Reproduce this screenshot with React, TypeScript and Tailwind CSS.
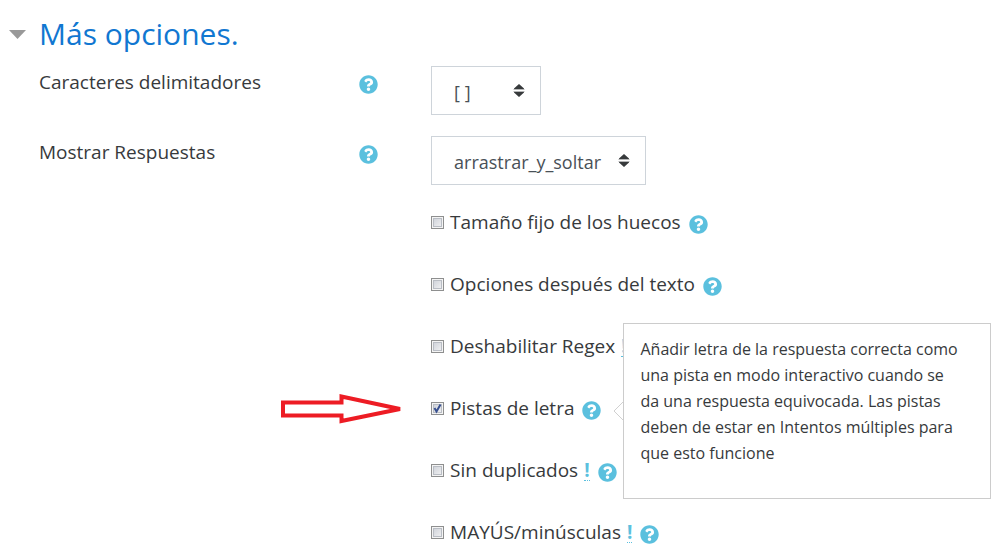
import { ReactNode, useState } from "react";
import { FaQuestionCircle } from "react-icons/fa";

type Option = { id: string; label: string; advanced?: boolean; hint?: string; marked?: boolean };

const OPTIONS: Option[] = [
  { id: "fixedgapsize", label: "Tamaño fijo de los huecos" },
  { id: "optionsaftertext", label: "Opciones después del texto" },
  { id: "disableregex", label: "Deshabilitar Regex", advanced: true },
  {
    id: "letterhints",
    label: "Pistas de letra",
    marked: true,
    hint: "Añadir letra de la respuesta correcta como una pista en modo interactivo cuando se da una respuesta equivocada. Las pistas deben de estar en Intentos múltiples para que esto funcione",
  },
  { id: "noduplicates", label: "Sin duplicados", advanced: true },
  { id: "casesensitive", label: "MAYÚS/minúsculas", advanced: true },
];

function Help({ hint }: { hint?: string }) {
  return (
    <span className="relative flex">
      <button type="button" aria-label="Ayuda" className="text-[#5bc0de]">
        <FaQuestionCircle className="size-[19px]" />
      </button>
      {hint && (
        <div
          role="tooltip"
          className="absolute left-full top-1/2 z-10 ml-[22px] min-h-44 w-[368px] -translate-y-1/2 border border-[#ccc] bg-white py-3 pl-4 pr-6 text-[16px] leading-[26px] text-[#373a3c]"
        >
          <svg className="absolute right-full top-1/2 h-5 w-[11px] -translate-y-1/2" viewBox="0 0 11 20" fill="none">
            <path d="M10.5 .5 1 10l9.5 9.5" stroke="#d0d0d0" />
          </svg>
          {hint}
        </div>
      )}
    </span>
  );
}

function Row({ id, label, children }: { id: string; label: string; children: ReactNode }) {
  return (
    <div className="grid grid-cols-12">
      <div className="col-span-5 flex items-start justify-between pr-[53px] pt-[3px]">
        <label htmlFor={id}>{label}</label>
        <span className="pt-1.5">
          <Help />
        </span>
      </div>
      <div className="col-span-7">{children}</div>
    </div>
  );
}

function Select({ id, width, options }: { id: string; width: string; options: string[] }) {
  return (
    <span className={`relative block ${width}`}>
      <select
        id={id}
        className="h-[49px] w-full appearance-none border border-[#ced4da] bg-white pl-[22px] pt-1 text-[18px] text-[#495057]"
      >
        {options.map((o) => (
          <option key={o}>{o}</option>
        ))}
      </select>
      <svg className="pointer-events-none absolute right-4 top-[18px] h-[13px] w-3" viewBox="0 0 12 13">
        <path d="M6 0 11 4.5V5H1v-.5zM6 13l5-4.500V8H1v.5z" fill="#373a3c" />
        <path d="M.5 5h11v1H.5zM.5 7h11v1H.5z" fill="#b5b6b7" />
      </svg>
    </span>
  );
}

function Check({ option }: { option: Option }) {
  const [on, setOn] = useState(!!option.marked);
  return (
    <div className="relative flex items-center">
      {option.marked && (
        <svg className="absolute right-full mr-7 h-[30px] w-[122px]" viewBox="0 0 122 30" fill="none">
          <path d="M2 8.500h58.500V2.500L119 15 60.500 27V21.500H2z" stroke="#ed1c24" strokeWidth="4" />
        </svg>
      )}
      <span className="relative flex">
        <input
          id={option.id}
          type="checkbox"
          checked={on}
          onChange={(e) => setOn(e.target.checked)}
          className="peer size-[13px] appearance-none border border-[#8e8f8f] bg-linear-to-br from-[#c9cdd5] to-[#f6f6f6] shadow-[inset_0_0_0_1px_#f4f4f4,inset_0_0_0_2px_#b9bdc4]"
        />
        <svg className="pointer-events-none absolute inset-0 hidden size-[13px] peer-checked:block" viewBox="0 0 13 13" fill="none">
          <path d="M3.500 6 5.500 9.500 9.500 2.500" stroke="#38508f" strokeWidth="2" />
        </svg>
      </span>
      <label htmlFor={option.id} className="ml-1.5">{option.label}</label>
      {option.advanced && (
        <abbr title="Avanzado" className="ml-1.5 border-b border-dotted border-[#5bc0de] font-bold leading-5 text-[#5bc0de] no-underline">
          !
        </abbr>
      )}
      <span className="ml-2 pt-1">
        <Help hint={option.hint} />
      </span>
    </div>
  );
}

export default function App() {
  const [open, setOpen] = useState(true);

  return (
    <form className="bg-white pb-3 pl-[39px] pr-[27px] pt-3 font-['Open_Sans','Noto_Sans',sans-serif] text-[19px] leading-[27px] text-[#373a3c]">
      <h3 className="-ml-[30px] text-[30px] leading-[44px] text-[#1177d1]">
        <button type="button" aria-expanded={open} onClick={() => setOpen(!open)} className="flex items-center">
          <svg className="mr-[13px] h-[9px] w-[17px]" viewBox="0 0 17 9">
            <path d="M0 0h17L8.500 9z" fill="#999" />
          </svg>
          Más opciones.
        </button>
      </h3>
      {open && (
        <div className="mt-2.5 flex flex-col gap-[21px]">
          <Row id="delimitchars" label="Caracteres delimitadores">
            <Select id="delimitchars" width="w-[110px]" options={["[ ]", "{ }", "# #", "@ @"]} />
          </Row>
          <Row id="answerdisplay" label="Mostrar Respuestas">
            <Select id="answerdisplay" width="w-[215px]" options={["arrastrar_y_soltar", "rellenar_huecos", "menú_desplegable"]} />
          </Row>
          <div className="grid grid-cols-12">
            <div className="col-span-7 col-start-6 flex flex-col gap-[35px] pt-[3px]">
              {OPTIONS.map((o) => (
                <Check key={o.id} option={o} />
              ))}
            </div>
          </div>
        </div>
      )}
    </form>
  );
}
